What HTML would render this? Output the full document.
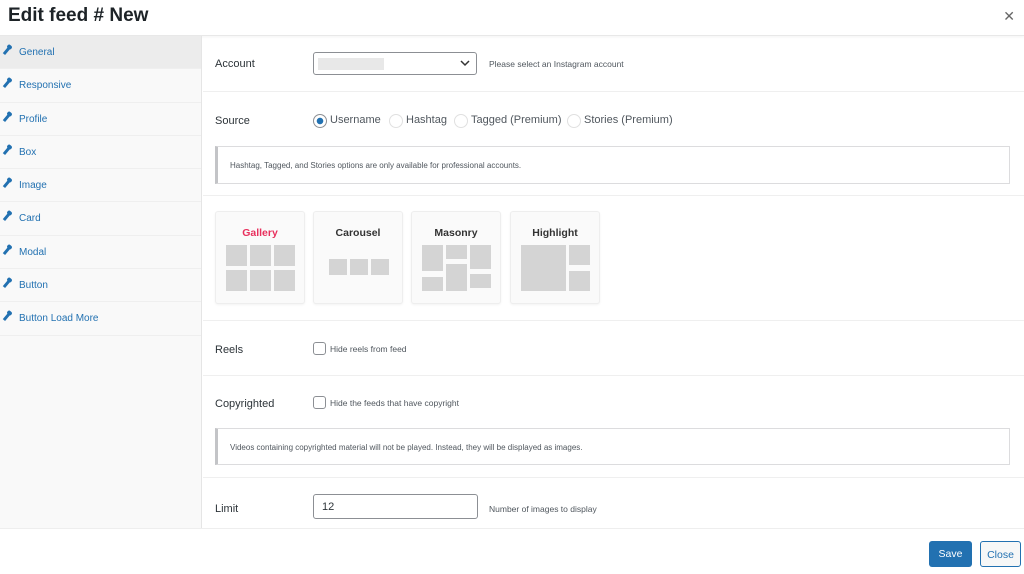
<!DOCTYPE html>
<html><head><style>
*{box-sizing:border-box;margin:0;padding:0}
body{width:1024px;height:574px;overflow:hidden;background:#fff;font-family:"Liberation Sans",sans-serif;color:#2c3338;position:relative}
.hdr{position:absolute;left:0;top:0;width:1024px;height:36px;border-bottom:1px solid #e8e8e8;box-shadow:0 1px 3px rgba(0,0,0,.05)}
.hdr h1{position:absolute;left:8px;top:5px;font-size:19px;font-weight:600;color:#1d2327}
.x{position:absolute;right:9px;top:8px;font-size:14px;color:#666}
.side{position:absolute;left:0;top:36px;width:202px;height:492px;background:#f9f9f9;border-right:1px solid #e5e5e5}
.side div{height:33.3px;border-bottom:1px solid #efefef;font-size:10px;color:#2271b1;padding:11px 0 0 19px;position:relative}
.side div:before{content:"";position:absolute;left:5px;top:11px;width:3px;height:8px;background:#2271b1;transform:rotate(40deg)}
.side div:after{content:"";position:absolute;left:7px;top:9px;width:5px;height:4px;border-radius:2px;background:#2271b1;transform:rotate(40deg)}
.side .act{background:#ececec}
.main{position:absolute;left:203px;top:36px;width:821px;height:492px}
.sec{position:absolute;left:0;width:821px;border-bottom:1px solid #efefef}
.lbl{position:absolute;left:12px;font-size:11px;color:#2c3338}
.note{position:absolute;font-size:8.5px;color:#50575e}
.sel{position:absolute;left:110px;top:16px;width:164px;height:23px;border:1px solid #8c8f94;border-radius:3px}
.sel .blur{position:absolute;left:4px;top:5px;width:66px;height:12px;background:#e8e8e8}
.sel svg{position:absolute;right:6px;top:7px}
.rad{position:absolute;top:78px;font-size:11px;color:#50575e;padding-left:17px;line-height:13px}
.rad:before{content:"";position:absolute;left:0;top:0;width:12px;height:12px;border-radius:50%;border:1px solid #e0e0e0}
.rad.on:before{border-color:#8c8f94;background:radial-gradient(circle,#2271b1 3px,#fff 3.5px)}
.box{position:absolute;left:12px;width:795px;border:1px solid #dcdcde;border-left:3px solid #c3c4c7;font-size:8px;color:#50575e;padding-left:12px}
.card{position:absolute;top:175px;width:90px;height:93px;border:1px solid #eee;border-radius:3px;background:#fafafa;box-shadow:0 1px 2px rgba(0,0,0,.05);text-align:center;font-size:10.5px;font-weight:bold;padding-top:15px;color:#333}
.g{position:absolute;background:#d4d4d4}
.chk{position:absolute;left:110px;width:13px;height:13px;border:1px solid #8c8f94;border-radius:3px}
.inp{position:absolute;left:313px;top:494px;width:165px;height:25px;border:1px solid #8c8f94;border-radius:3px;font-size:11px;padding:6px 8px}
.btn{position:absolute;top:541px;height:26px;border-radius:3px;font-size:10.5px;text-align:center;padding-top:7px}
</style></head><body>
<div class="hdr"><h1>Edit feed # New</h1><div class="x">✕</div></div>
<div class="side">
<div class="act">General</div><div>Responsive</div><div>Profile</div><div>Box</div><div>Image</div><div>Card</div><div>Modal</div><div>Button</div><div>Button Load More</div>
</div>
<div class="main">
<div class="sec" style="top:0;height:56px"></div>
<div class="lbl" style="top:22px">Account</div>
<div class="sel"><div class="blur"></div><svg width="10" height="7"><path d="M1 1l4 4 4-4" stroke="#333" stroke-width="1.5" fill="none"/></svg></div>
<div class="note" style="left:286px;top:23px">Please select an Instagram account</div>
<div class="sec" style="top:56px;height:104px"></div>
<div class="lbl" style="top:79px">Source</div>
<div class="rad on" style="left:110px">Username</div>
<div class="rad" style="left:186px">Hashtag</div>
<div class="rad" style="left:251px">Tagged (Premium)</div>
<div class="rad" style="left:364px">Stories (Premium)</div>
<div class="box" style="top:110px;height:38px;padding-top:14px">Hashtag, Tagged, and Stories options are only available for professional accounts.</div>
<div class="sec" style="top:160px;height:125px"></div>
<div class="card" style="left:12px;color:#e8305d">Gallery
<div class="g" style="left:10px;top:33px;width:21px;height:21px"></div><div class="g" style="left:34px;top:33px;width:21px;height:21px"></div><div class="g" style="left:58px;top:33px;width:21px;height:21px"></div>
<div class="g" style="left:10px;top:58px;width:21px;height:21px"></div><div class="g" style="left:34px;top:58px;width:21px;height:21px"></div><div class="g" style="left:58px;top:58px;width:21px;height:21px"></div></div>
<div class="card" style="left:110px">Carousel
<div class="g" style="left:15px;top:47px;width:18px;height:16px"></div><div class="g" style="left:36px;top:47px;width:18px;height:16px"></div><div class="g" style="left:57px;top:47px;width:18px;height:16px"></div></div>
<div class="card" style="left:208px">Masonry
<div class="g" style="left:10px;top:33px;width:21px;height:26px"></div><div class="g" style="left:34px;top:33px;width:21px;height:14px"></div><div class="g" style="left:58px;top:33px;width:21px;height:24px"></div>
<div class="g" style="left:10px;top:65px;width:21px;height:14px"></div><div class="g" style="left:34px;top:52px;width:21px;height:27px"></div><div class="g" style="left:58px;top:62px;width:21px;height:14px"></div></div>
<div class="card" style="left:307px">Highlight
<div class="g" style="left:10px;top:33px;width:45px;height:46px"></div><div class="g" style="left:58px;top:33px;width:21px;height:20px"></div><div class="g" style="left:58px;top:59px;width:21px;height:20px"></div></div>
<div class="sec" style="top:285px;height:55px"></div>
<div class="lbl" style="top:308px">Reels</div>
<div class="chk" style="top:306px"></div><div class="note" style="left:127px;top:308px">Hide reels from feed</div>
<div class="sec" style="top:340px;height:102px"></div>
<div class="lbl" style="top:362px">Copyrighted</div>
<div class="chk" style="top:360px"></div><div class="note" style="left:127px;top:362px">Hide the feeds that have copyright</div>
<div class="box" style="top:392px;height:37px;padding-top:14px">Videos containing copyrighted material will not be played. Instead, they will be displayed as images.</div>
<div class="lbl" style="top:467px">Limit</div>
</div>
<div class="inp">12</div>
<div class="note" style="left:489px;top:504px">Number of images to display</div>
<div style="position:absolute;left:0;top:528px;width:1024px;border-top:1px solid #eee"></div>
<div class="btn" style="left:929px;width:43px;background:#2271b1;color:#fff">Save</div>
<div class="btn" style="left:980px;width:41px;border:1px solid #2271b1;color:#2271b1;background:#f6f7f7">Close</div>
</body></html>
